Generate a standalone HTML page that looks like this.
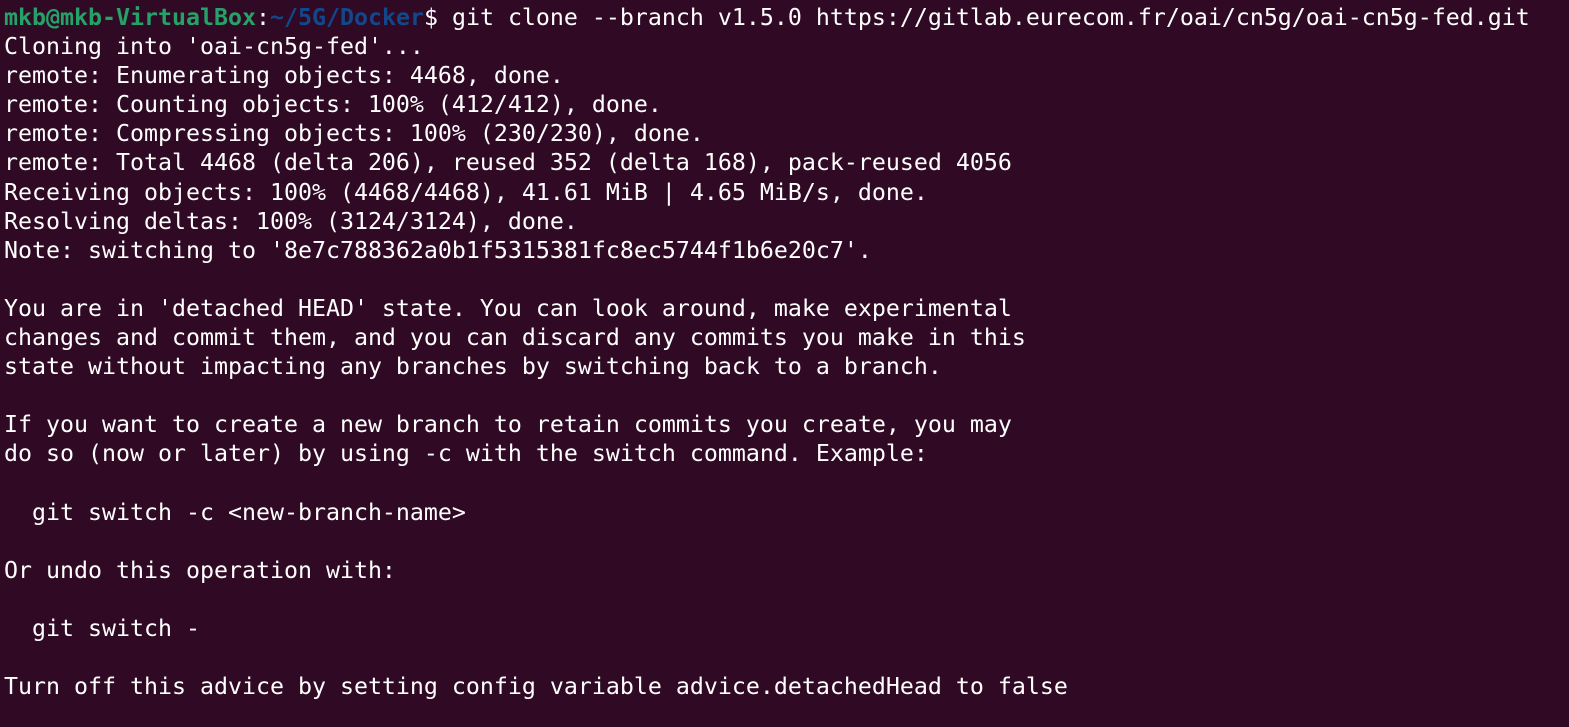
<!DOCTYPE html>
<html><head><meta charset="utf-8"><style>
html,body{margin:0;padding:0;background:#300a24;width:1569px;height:727px;overflow:hidden}
pre{margin:0;position:absolute;left:4px;top:3px;font-family:"DejaVu Sans Mono","Liberation Mono",monospace;font-size:23.25px;line-height:29.09px;color:#ffffff;white-space:pre}
.g{color:#26a269;font-weight:bold}.b{color:#12488b;font-weight:bold}
</style></head><body>
<pre><span class="g">mkb@mkb-VirtualBox</span>:<span class="b">~/5G/Docker</span>$ git clone --branch v1.5.0 https://gitlab.eurecom.fr/oai/cn5g/oai-cn5g-fed.git
Cloning into 'oai-cn5g-fed'...
remote: Enumerating objects: 4468, done.
remote: Counting objects: 100% (412/412), done.
remote: Compressing objects: 100% (230/230), done.
remote: Total 4468 (delta 206), reused 352 (delta 168), pack-reused 4056
Receiving objects: 100% (4468/4468), 41.61 MiB | 4.65 MiB/s, done.
Resolving deltas: 100% (3124/3124), done.
Note: switching to '8e7c788362a0b1f5315381fc8ec5744f1b6e20c7'.

You are in 'detached HEAD' state. You can look around, make experimental
changes and commit them, and you can discard any commits you make in this
state without impacting any branches by switching back to a branch.

If you want to create a new branch to retain commits you create, you may
do so (now or later) by using -c with the switch command. Example:

  git switch -c &lt;new-branch-name&gt;

Or undo this operation with:

  git switch -

Turn off this advice by setting config variable advice.detachedHead to false
</pre>
</body></html>
